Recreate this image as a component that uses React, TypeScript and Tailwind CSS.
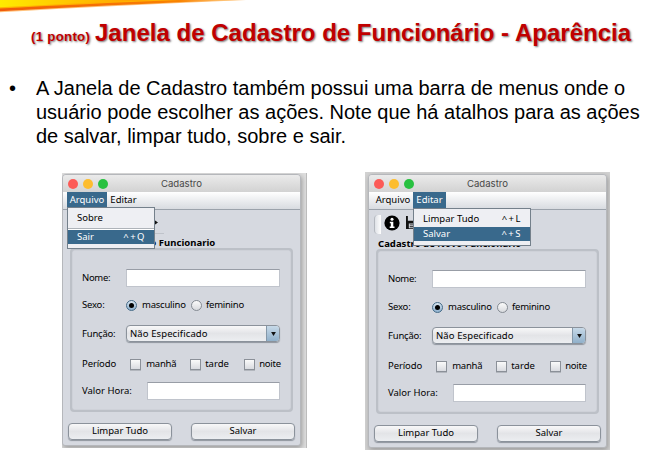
import type { ReactNode } from "react";

const control = "border border-[#8b929b] bg-linear-to-b from-[#f8f8f9] via-[#e3e4e7] to-[#eceef1] shadow-[0_1px_1px_#8f959e]";

function Radio({ on }: { on?: boolean }) {
  return (
    <span className={`flex size-[11px] shrink-0 items-center justify-center rounded-full border ${on ? "border-[#456b88] bg-linear-to-b from-[#d9e5ef] to-[#8db0ce]" : "border-[#858b93] bg-linear-to-b from-[#fbfbfb] to-[#d8dade]"}`}>
      {on && <span className="size-[5px] rounded-full bg-black" />}
    </span>
  );
}

function Check({ label, className, gap }: { label: string; className: string; gap: string }) {
  return (
    <span className={`flex shrink-0 items-center ${className}`}>
      <span className="size-[11px] shrink-0 border border-[#8b9098] bg-linear-to-b from-[#fafafa] to-[#d9dbe0] shadow-[0_1px_0_#b2b6bd]" />
      <span className={gap}>{label}</span>
    </span>
  );
}

function Button({ children }: { children: ReactNode }) {
  return (
    <div className={`flex h-[17px] w-[104px] items-center justify-center rounded-[4px] pb-px text-[9.5px] ${control}`}>
      {children}
    </div>
  );
}

function Field({ className }: { className: string }) {
  return <span className={`h-[18px] shrink-0 border border-[#c0c4cc] border-t-[#989da6] bg-white ${className}`} />;
}

function MenuItem({ label, keys, active, className }: { label: string; keys?: string; active?: boolean; className: string }) {
  return (
    <div className={`flex items-center justify-between pr-[8px] pl-[9px] ${active ? "bg-[#39698c] text-white" : ""} ${className}`}>
      <span>{label}</span>
      <span className="tracking-[1.5px]">{keys}</span>
    </div>
  );
}

function Window({ open }: { open: "arquivo" | "editar" }) {
  const left = open === "arquivo";
  return (
    <div className={`relative flex w-[239px] flex-col overflow-hidden rounded-t-[4px] rounded-b-[3px] border border-[#b5b7bb] bg-[#d6d9e0] font-['Noto_Sans','Open_Sans',sans-serif] text-[9.5px] leading-none text-black shadow-[1px_2px_5px_#999] ${left ? "h-[272px]" : "h-[274px]"}`}>
      <div className="relative flex h-[17px] shrink-0 items-center justify-center bg-linear-to-b from-[#ebebeb] to-[#d2d2d2] font-['Inter',sans-serif] text-[9.6px] text-[#484848]">
        <div className="absolute left-[5px] flex gap-[5px]">
          <i className="size-[10px] rounded-full bg-[#fc5b57]" />
          <i className="size-[10px] rounded-full bg-[#fdbd2f]" />
          <i className="size-[10px] rounded-full bg-[#28c140]" />
        </div>
        Cadastro
      </div>
      <div className="flex h-[18px] shrink-0 border-b border-[#9ba2ab] bg-linear-to-b from-white to-[#d8dbe0] pl-1">
        <span className={`flex w-10 items-center justify-center pb-px ${left ? "bg-[#39698c] text-white" : ""}`}>Arquivo</span>
        <span className={`flex w-[33px] items-center justify-center pb-px ${left ? "" : "bg-[#39698c] text-white"}`}>Editar</span>
      </div>
      <div className="flex h-[26px] shrink-0 items-start pt-[5px] pl-[5px]">
        <span className="h-[19px] w-[7px] rounded-l border-l border-[#b4b8bf] bg-linear-to-r from-[#dfe2e7] to-white" />
        <svg className="ml-[3px] size-[16px]" viewBox="0 0 16 16">
          <circle cx="8" cy="8" r="7.6" fill="#000" />
          <circle cx="8" cy="4.2" r="1.5" fill="#fff" />
          <path d="M5.8 6.8h3.5v4.7h1.2V13H5.7v-1.5h1.1V8.2h-1z" fill="#fff" />
        </svg>
        <svg className="ml-[6px] size-[15px]" viewBox="0 0 16 16">
          <path d="M0 1h2v5h9V1h2l2 3v11H0z" fill="#111" />
          <path d="M3 9h9v5H3z" fill="#d6d9e0" />
          <path d="M4 10h7v1H4zM4 12h7v1H4z" fill="#111" />
        </svg>
        <div className="ml-[32px] flex h-[19px] w-[17px] flex-col justify-between border-b border-[#bfc3ca]">
          <svg className="h-[15px] w-[12px]" viewBox="0 0 12 15">
            <path d="M0 6h6V4l5 3.500-5 3.500V9H0z" fill="#111" />
          </svg>
        </div>
      </div>
      <div className={`shrink-0 pl-[9px] text-[9.5px] leading-[10px] font-bold tracking-[0.03px] whitespace-nowrap text-black ${left ? "h-[12px] pt-[2px]" : "h-[13px] pt-[3px]"}`}>
        Cadastro de Novo Funcionario
      </div>
      <div className={`mx-[7px] flex shrink-0 flex-col rounded-[4px] border-2 border-[#bcc0c7] bg-[#d4d7de] px-[10px] pt-[19px] shadow-[inset_0_0_1px_#989da5] ${left ? "h-[164px]" : "h-[165px]"}`}>
        <div className="flex h-[18px] items-center">
          <span className="w-[44px] tracking-[-0.3px]">Nome:</span>
          <Field className="w-[154px]" />
        </div>
        <div className={`flex h-[16px] items-center ${left ? "mt-[10px]" : "mt-[11px]"}`}>
          <span className="w-[44px] tracking-[-0.2px]">Sexo:</span>
          <Radio on />
          <span className="ml-[5px] w-[49px] tracking-[-0.22px]">masculino</span>
          <Radio />
          <span className="ml-[4px] tracking-[-0.25px]">feminino</span>
        </div>
        <div className="mt-[12px] flex h-[17px] items-center">
          <span className="w-[44px] tracking-[-0.2px]">Função:</span>
          <div className={`flex h-[17px] w-[154px] items-center justify-between overflow-hidden rounded-[4px] pl-[3px] ${control}`}>
            <span className="tracking-[0.1px]">Não Especificado</span>
            <span className="flex h-full w-[13px] items-center justify-center border-l border-[#8497a8] bg-linear-to-b from-[#c7d9e8] to-[#90b0ca]">
              <svg className="h-[4px] w-[5px]" viewBox="0 0 6 5">
                <path d="M0 0h6L3 5z" fill="#111" />
              </svg>
            </span>
          </div>
        </div>
        <div className="mt-[14px] flex h-[16px] items-center">
          <span className="w-[49px] tracking-[-0.1px]">Período</span>
          <Check label="manhã" className="w-[60px]" gap="ml-[5px] tracking-[-0.2px]" />
          <Check label="tarde" className="w-[54px]" gap="ml-[4px]" />
          <Check label="noite" className="" gap="ml-[4px] tracking-[-0.2px]" />
        </div>
        <div className="mt-[10px] flex h-[18px] items-center">
          <span className="w-[65px]">Valor Hora:</span>
          <Field className="w-[133px]" />
        </div>
      </div>
      <div className="mt-[11px] flex justify-between pr-[5px] pl-[5px]">
        <Button>Limpar Tudo</Button>
        <Button>Salvar</Button>
      </div>
      {left ? (
        <div className="absolute top-[32px] left-[4px] flex h-[42px] w-[88px] flex-col border border-[#74808b] bg-[#eeeff3]">
          <MenuItem label="Sobre" className="h-[20px]" />
          <div className="h-[2px] border-t border-[#aeb3b9] bg-white" />
          <MenuItem label="Sair" keys="^+Q" active className="h-[14px]" />
        </div>
      ) : (
        <div className="absolute top-[33px] left-[44px] flex h-[38px] w-[118px] flex-col border border-[#74808b] bg-[#eeeff3]">
          <MenuItem label="Limpar Tudo" keys="^+L" className="h-[18px] pt-[2px]" />
          <MenuItem label="Salvar" keys="^+S" active className="h-[14px]" />
        </div>
      )}
    </div>
  );
}

export default function App() {
  return (
    <main className="relative h-[459px] w-[658px] overflow-hidden bg-white font-['Liberation_Sans',Arial,sans-serif]">
      <svg className="absolute top-0 left-0 h-[13px] w-[250px]" viewBox="0 0 250 13">
        <defs>
          <linearGradient id="yellow">
            <stop stopColor="#ffec00" />
            <stop offset="1" stopColor="#ff9900" />
          </linearGradient>
          <linearGradient id="orange">
            <stop stopColor="#f05a0a" />
            <stop offset="0.75" stopColor="#f98200" />
            <stop offset="1" stopColor="#ffd28a" />
          </linearGradient>
        </defs>
        <path d="M0 0H246Q110 6 0 12.2z" fill="#ffc37d" />
        <path d="M0 0H238Q105 5 0 11.2z" fill="url(#orange)" />
        <path d="M0 0H180Q80 4 0 8.5z" fill="#ffb000" />
        <path d="M0 0H150Q70 3.5 0 7.3z" fill="url(#yellow)" />
      </svg>
      <h1 className="flex h-[66px] items-baseline pt-[19px] pl-[31px] leading-[28px] font-bold whitespace-nowrap text-[#c00000] [text-shadow:1px_1px_2px_#777]">
        <span className="w-[64px] text-[13.3px] tracking-[0.25px]">(1 ponto)</span>
        <span className="text-[24px] tracking-[0.02px]">Janela de Cadastro de Funcionário - Aparência</span>
      </h1>
      <div className="flex h-[106px] pt-[10px] pl-[9px] text-[20px] leading-[24px] whitespace-nowrap text-black">
        <span className="w-[27px]">•</span>
        <p>
          A Janela de Cadastro também possui uma barra de menus onde o<br />
          usuário pode escolher as ações. Note que há atalhos para as ações<br />
          de salvar, limpar tudo, sobre e sair.
        </p>
      </div>
      <div className="flex items-start">
        <div className="mt-px ml-[62px] h-[275px] w-[245px] overflow-hidden border-r border-[#bcbcbc] bg-[#dedede] pt-px">
          <Window open="arquivo" />
        </div>
        <div className="ml-[58px] h-[278px] w-[245px] overflow-hidden bg-[#d2d2d2] pt-[2px] pl-[3px]">
          <Window open="editar" />
        </div>
      </div>
    </main>
  );
}
